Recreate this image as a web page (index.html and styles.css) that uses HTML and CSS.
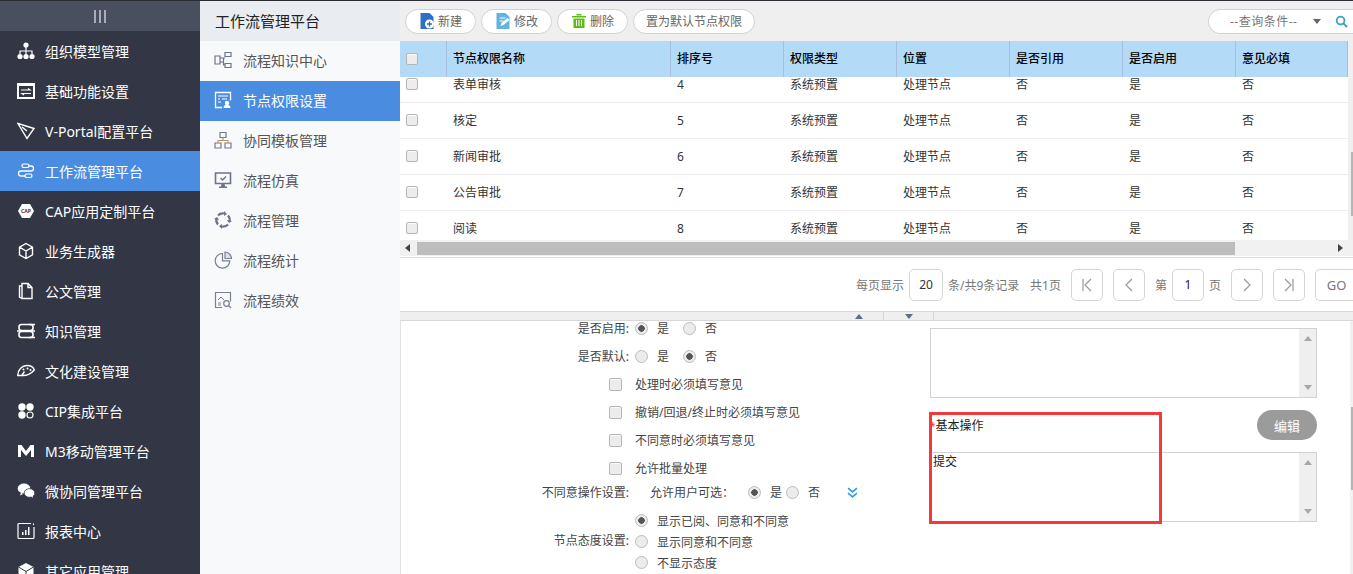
FILE: index.html
```html
<!DOCTYPE html>
<html lang="zh-CN">
<head>
<meta charset="utf-8">
<title>节点权限设置</title>
<link rel="stylesheet" href="styles.css">
</head>
<body>
<div class="app">
  <nav class="rail">
    <div class="rail-top"><span class="bars"><i></i><i></i><i></i></span></div>
    <a class="rail-item"><svg class="ri" viewBox="0 0 18 18"><circle cx="9" cy="3" r="2.6" fill="#fff"/><path d="M9 5v4M3 12V9h12v3M9 9v3" stroke="#fff" stroke-width="1.2" fill="none"/><circle cx="3" cy="14.5" r="2.6" fill="#fff"/><circle cx="9" cy="14.5" r="2.6" fill="#fff"/><circle cx="15" cy="14.5" r="2.6" fill="#fff"/></svg><span>组织模型管理</span></a>
    <a class="rail-item"><svg class="ri" viewBox="0 0 18 18"><path d="M0 1h18v16H0z" fill="#fff"/><path d="M2 4h14v11H2z" fill="#333745"/><path d="M4 8h9l-2-1.500M14 11.500H5l2 1.500" stroke="#fff" stroke-width="1.200" fill="none"/></svg><span>基础功能设置</span></a>
    <a class="rail-item"><svg class="ri" viewBox="0 0 18 18"><path d="M1 1.500l16 5-7 10zM5 5l5 4" fill="none" stroke="#fff" stroke-width="1.400"/></svg><span>V-Portal配置平台</span></a>
    <a class="rail-item is-on"><svg class="ri" viewBox="0 0 18 18"><path d="M6 4h8a2.500 2.500 0 0 1 0 5H4a2.500 2.500 0 0 0 0 5h7" fill="none" stroke="#fff" stroke-width="1.300"/><rect x="5" y="2" width="7" height="3.500" rx="1.700" fill="#4a8de0" stroke="#fff" stroke-width="1.200"/><rect x="8" y="12" width="7" height="3.500" rx="1.700" fill="#4a8de0" stroke="#fff" stroke-width="1.200"/></svg><span>工作流管理平台</span></a>
    <a class="rail-item"><svg class="ri" viewBox="0 0 18 18"><path d="M5 2h8l4 7-4 7H5L1 9z" fill="#fff"/><text x="9" y="11" class="cap-text">CAP</text></svg><span>CAP应用定制平台</span></a>
    <a class="rail-item"><svg class="ri" viewBox="0 0 18 18"><path d="M9 1.500l6.500 3.700v7.600L9 16.500l-6.500-3.700V5.200zM2.500 5.200L9 9l6.500-3.800M9 9v7.500" fill="none" stroke="#fff" stroke-width="1.400"/></svg><span>业务生成器</span></a>
    <a class="rail-item"><svg class="ri" viewBox="0 0 18 18"><path d="M5 1.500h6l4 4V16.500H5zM11 1.500v4h4M5 4H2.500v11L5 16.500" fill="none" stroke="#fff" stroke-width="1.400"/></svg><span>公文管理</span></a>
    <a class="rail-item"><svg class="ri" viewBox="0 0 18 18"><rect x="2" y="2.500" width="14" height="6" rx="2.500" fill="none" stroke="#fff" stroke-width="1.600"/><rect x="2" y="9.500" width="14" height="6" rx="2.500" fill="none" stroke="#fff" stroke-width="1.600"/><path d="M0 9h18M12 2.500h6M12 15.500h6" stroke="#fff" stroke-width="1.500"/></svg><span>知识管理</span></a>
    <a class="rail-item"><svg class="ri" viewBox="0 0 18 18"><path d="M.7 13.500C1 7.500 5 3.500 10 3.500c3.500 0 6.500 1.800 7.300 4.500-3 3.500-6.500 5.500-11.300 5.500zM5 13l2.500-3.500" fill="none" stroke="#fff" stroke-width="1.400"/><circle cx="10.500" cy="6.500" r="1" fill="#fff"/><circle cx="6.500" cy="7.500" r="1" fill="#fff"/><circle cx="13.500" cy="8" r="1" fill="#fff"/></svg><span>文化建设管理</span></a>
    <a class="rail-item"><svg class="ri" viewBox="0 0 18 18"><circle cx="5" cy="5" r="3.700" fill="#fff"/><circle cx="13" cy="5" r="3.700" fill="#fff"/><circle cx="5" cy="13" r="3.700" fill="#fff"/><circle cx="13" cy="13" r="3" fill="none" stroke="#fff" stroke-width="1.200"/></svg><span>CIP集成平台</span></a>
    <a class="rail-item"><svg class="ri" viewBox="0 0 18 18"><path d="M1 3h3.500L9 9l4.500-6H17v12h-3V8l-5 6-5-6v7H1z" fill="#fff"/></svg><span>M3移动管理平台</span></a>
    <a class="rail-item"><svg class="ri" viewBox="0 0 18 18"><ellipse cx="7" cy="6.500" rx="6.300" ry="5" fill="#fff"/><ellipse cx="12.500" cy="11" rx="5.300" ry="4.300" fill="#fff" stroke="#333745" stroke-width=".8"/><path d="M4 10.500l-1 3 3-1.500zM14 14l2 2-.5-3z" fill="#fff"/></svg><span>微协同管理平台</span></a>
    <a class="rail-item"><svg class="ri" viewBox="0 0 18 18"><path d="M14 1.500H2a1 1 0 0 0-1 1v13a1 1 0 0 0 1 1h14a1 1 0 0 0 1-1V5M16.500 1.500v1.500" fill="none" stroke="#fff" stroke-width="1.200"/><path d="M5 10h1.500v3H5zM8 8h1.500v5H8zM11 5h1.500v8H11z" fill="#fff"/></svg><span>报表中心</span></a>
    <a class="rail-item"><svg class="ri" viewBox="0 0 18 18"><path d="M9 1l7.500 4v8.500L9 17.500l-7.500-4V5z" fill="#fff"/><path d="M1.500 5L9 9.500 16.500 5M9 9.500v8" stroke="#333745" stroke-width="1" fill="none"/></svg><span>其它应用管理</span></a>
  </nav>

  <aside class="sub">
    <div class="sub-title">工作流管理平台</div>
    <a class="sub-item"><svg class="si" viewBox="0 0 18 18"><path d="M1 5h5v8H1zM11 1.500h6v4h-6zM11 12.500h6v4h-6zM6 7h5M6 11h3.500V14H11M9.500 7v4" fill="none" stroke="#6d7388" stroke-width="1.200"/></svg><span>流程知识中心</span></a>
    <a class="sub-item is-on"><svg class="si" viewBox="0 0 18 18"><path d="M8 16.500H1.500v-15h15v8" fill="none" stroke="#fff" stroke-width="1.300"/><path d="M4 5h10M4 8h2M8 8h5M4 11h3" stroke="#fff" stroke-width="1.200"/><circle cx="13" cy="12" r="2.200" fill="#fff"/><path d="M9.500 17c0-2.500 1.500-3 3.500-3s3.500.5 3.500 3z" fill="#fff"/></svg><span>节点权限设置</span></a>
    <a class="sub-item"><svg class="si" viewBox="0 0 18 18"><path d="M6 1.500h6v5H6zM1 12h6v5H1zM11 12h6v5h-6z" fill="none" stroke="#757b8e" stroke-width="1.200"/><path d="M9 6.500V9.500M4 12V9.500h10V12" fill="none" stroke="#b99b6a" stroke-width="1.200"/></svg><span>协同模板管理</span></a>
    <a class="sub-item"><svg class="si" viewBox="0 0 18 18"><path d="M1.500 2h15v10.500h-15z" fill="none" stroke="#6d7388" stroke-width="1.600"/><path d="M6.500 7l2 2 3.500-3.500" fill="none" stroke="#6d7388" stroke-width="1.400"/><path d="M7.500 12.500h3l.5 3H7z M5 15.500h8V17H5z" fill="#6d7388"/></svg><span>流程仿真</span></a>
    <a class="sub-item"><svg class="si" viewBox="0 0 18 18"><path d="M4 4.500a6.500 6.500 0 0 1 6-2M14 4.500a6.500 6.500 0 0 1 1.500 6M14 13.500a6.500 6.500 0 0 1-6 2M4 13.500a6.500 6.500 0 0 1-1.500-6" fill="none" stroke="#6d7388" stroke-width="2.200"/><path d="M10 0l3 3-3 2zM8 18l-3-3 3-2zM0 8l3-2 2 3zM18 10l-3 2-2-3z" fill="#6d7388"/></svg><span>流程管理</span></a>
    <a class="sub-item"><svg class="si" viewBox="0 0 18 18"><path d="M8.500 2.500a7.300 7.300 0 1 0 7.300 7.300H8.500z" fill="none" stroke="#7a8092" stroke-width="1.200"/><path d="M11 1v6.500h6.500A6.800 6.800 0 0 0 11 1z" fill="#dfe1e8" stroke="#7a8092" stroke-width="1.200"/></svg><span>流程统计</span></a>
    <a class="sub-item"><svg class="si" viewBox="0 0 18 18"><path d="M8 16.500H1.500v-15h15v9" fill="none" stroke="#7a8092" stroke-width="1.200"/><path d="M4 9l3-3 3 3M4 12h3M4 14h3" fill="none" stroke="#7a8092" stroke-width="1"/><circle cx="12.500" cy="12.500" r="2.800" fill="none" stroke="#7a8092" stroke-width="1.200"/><path d="M14.500 14.500l2.500 2.500" stroke="#7a8092" stroke-width="1.200"/></svg><span>流程绩效</span></a>
  </aside>

  <main class="main">
    <div class="toolbar">
      <button class="tb-btn"><svg class="tb-ico" viewBox="0.500 0 14 16"><path d="M1 0h9l4 4v12H1z" fill="#2f6ec4"/><circle cx="10" cy="11" r="4.500" fill="#fff"/><path d="M7.500 11h5M10 8.500v5" stroke="#2f6ec4" stroke-width="1.300"/></svg>新建</button>
      <button class="tb-btn"><svg class="tb-ico" viewBox="0.500 0 14 16"><path d="M1 0h9l4 4v12H1z" fill="#62b3e0"/><path d="M4 5h6M4 8h4" stroke="#fff" stroke-width="1.200"/><path d="M5 13l1-3 6-5 2 2-6 5z" fill="#fff"/></svg>修改</button>
      <button class="tb-btn"><svg class="tb-ico" viewBox="1 0.500 14 15"><path d="M1 3h14v1.500H1zM5.500 1h5v1.500h-5zM2.500 5.500h11V15h-11z" fill="#5dbb1c"/><path d="M5.500 7v6M8 7v6M10.500 7v6" stroke="#fff" stroke-width="1"/></svg>删除</button>
      <button class="tb-btn is-text">置为默认节点权限</button>
      <div class="query"><span class="query-text">--查询条件--</span><i class="tri-down"></i><svg class="query-ico" viewBox="0 0 14 14"><circle cx="6" cy="6" r="4.200" fill="none" stroke="#3fa0c8" stroke-width="2"/><path d="M9 9l4 4" stroke="#3fa0c8" stroke-width="2.200"/></svg></div>
    </div>

    <div class="table-wrap">
      <div class="grid-row head">
        <div class="c c0"><i class="cb"></i></div><div class="c">节点权限名称</div><div class="c">排序号</div><div class="c">权限类型</div><div class="c">位置</div><div class="c">是否引用</div><div class="c">是否启用</div><div class="c">意见必填</div>
      </div>
      <div class="table-body">
        <div class="rows">
          <div class="grid-row"><div class="c c0"><i class="cb"></i></div><div class="c">表单审核</div><div class="c">4</div><div class="c">系统预置</div><div class="c">处理节点</div><div class="c">否</div><div class="c">是</div><div class="c">否</div></div>
          <div class="grid-row"><div class="c c0"><i class="cb"></i></div><div class="c">核定</div><div class="c">5</div><div class="c">系统预置</div><div class="c">处理节点</div><div class="c">否</div><div class="c">是</div><div class="c">否</div></div>
          <div class="grid-row"><div class="c c0"><i class="cb"></i></div><div class="c">新闻审批</div><div class="c">6</div><div class="c">系统预置</div><div class="c">处理节点</div><div class="c">否</div><div class="c">是</div><div class="c">否</div></div>
          <div class="grid-row"><div class="c c0"><i class="cb"></i></div><div class="c">公告审批</div><div class="c">7</div><div class="c">系统预置</div><div class="c">处理节点</div><div class="c">否</div><div class="c">是</div><div class="c">否</div></div>
          <div class="grid-row"><div class="c c0"><i class="cb"></i></div><div class="c">阅读</div><div class="c">8</div><div class="c">系统预置</div><div class="c">处理节点</div><div class="c">否</div><div class="c">是</div><div class="c">否</div></div>
        </div>
      </div>
      <div class="hbar"><i class="tri-left"></i><div class="hbar-thumb"></div><i class="tri-right"></i></div>
      <div class="vbar"><div class="vbar-thumb"></div></div>
    </div>

    <div class="pager">
      <span>每页显示</span><span class="pg-box pg-size">20</span><span class="pg-count">条/共9条记录</span><span class="pg-total">共1页</span>
      <span class="pg-box pg-nav"><svg viewBox="0 0 12 14"><path d="M2 1v12M10 1L4 7l6 6" fill="none" stroke="#999" stroke-width="1.200"/></svg></span>
      <span class="pg-box pg-nav"><svg viewBox="0 0 12 14"><path d="M9 1L3 7l6 6" fill="none" stroke="#999" stroke-width="1.200"/></svg></span>
      <span>第</span><span class="pg-box pg-num">1</span><span class="pg-ye">页</span>
      <span class="pg-box pg-nav"><svg viewBox="0 0 12 14"><path d="M3 1l6 6-6 6" fill="none" stroke="#999" stroke-width="1.200"/></svg></span>
      <span class="pg-box pg-nav"><svg viewBox="0 0 12 14"><path d="M10 1v12M2 1l6 6-6 6" fill="none" stroke="#999" stroke-width="1.200"/></svg></span>
      <span class="pg-box pg-go">GO</span>
    </div>

    <div class="splitter"><span class="sp-cell"><i class="tri-up"></i></span><span class="sp-cell"><i class="tri-down"></i></span></div>

    <div class="form">
      <div class="form-left">
        <div class="f-row"><label class="f-label">是否启用:</label><i class="radio on"></i><span class="r-txt">是</span><i class="radio"></i><span class="r-txt">否</span></div>
        <div class="f-row"><label class="f-label">是否默认:</label><i class="radio"></i><span class="r-txt">是</span><i class="radio on"></i><span class="r-txt">否</span></div>
        <div class="f-row chk"><i class="cb"></i><span>处理时必须填写意见</span></div>
        <div class="f-row chk"><i class="cb"></i><span>撤销/回退/终止时必须填写意见</span></div>
        <div class="f-row chk"><i class="cb"></i><span>不同意时必须填写意见</span></div>
        <div class="f-row chk"><i class="cb"></i><span>允许批量处理</span></div>
        <div class="f-row opt"><label class="f-label">不同意操作设置:</label><span class="opt-txt">允许用户可选：</span><i class="radio on"></i><span class="r-tight">是</span><i class="radio"></i><span class="r-txt">否</span>
          <svg class="dbl" viewBox="0 0 10 10"><path d="M1 1l4 3.500L9 1M1 5.500L5 9l4-3.500" fill="none" stroke="#2b9af3" stroke-width="1.400"/></svg></div>
        <div class="attitude">
          <label class="f-label att-label">节点态度设置:</label>
          <div class="att-list">
            <div class="att"><i class="radio on"></i><span>显示已阅、同意和不同意</span></div>
            <div class="att"><i class="radio"></i><span>显示同意和不同意</span></div>
            <div class="att"><i class="radio"></i><span>不显示态度</span></div>
          </div>
        </div>
      </div>
      <div class="form-right">
        <div class="ta"><div class="ta-body"></div><div class="ta-bar"><i class="tri-up"></i><i class="tri-down"></i></div></div>
        <div class="op-head"><span class="op-title"><b>*</b>基本操作</span><button class="edit-btn">编辑</button></div>
        <div class="ta"><div class="ta-body">提交</div><div class="ta-bar"><i class="tri-up"></i><i class="tri-down"></i></div></div>
      </div>
      <div class="form-track"><div class="form-thumb"></div></div>
    </div>
    <div class="mark"></div>
  </main>
</div>
</body>
</html>
```

FILE: styles.css
```css
* { box-sizing: border-box; }
html, body { margin: 0; height: 100%; overflow: hidden; }
body {
  font-family: "Noto Sans", "Noto Sans CJK SC", sans-serif;
  font-size: 12px;
  color: #333;
  background: #fff;
}
i { display: block; font-style: normal; }
.app {
  display: flex;
  height: 574px;
  border-top: 1px solid #2a2b33;
}

/* first rail */
.rail { width: 200px; flex: none; background: #333745; overflow: hidden; }
.rail-top {
  height: 30px;
  background: #4a4f60;
  display: flex;
  align-items: center;
  justify-content: center;
}
.bars { display: flex; gap: 3px; }
.bars i { width: 2px; height: 13px; background: #a9acb6; }
.rail-item {
  display: flex;
  align-items: center;
  height: 40px;
  padding-left: 17px;
  color: #fff;
  font-size: 14px;
}
.rail-item.is-on { background: #4a8de0; }
.ri { width: 18px; height: 18px; margin-right: 10px; flex: none; }
.cap-text { font-size: 5px; font-weight: 700; fill: #333745; text-anchor: middle; }

/* second rail */
.sub { width: 200px; flex: none; background: #f8f9fb; }
.sub-title {
  height: 40px;
  line-height: 40px;
  padding-left: 15px;
  background: #e9edf2;
  color: #222;
  font-size: 15px;
}
.sub-item {
  display: flex;
  align-items: center;
  height: 40px;
  padding-left: 14px;
  padding-bottom: 2px;
  color: #555;
  font-size: 14px;
}
.sub-item.is-on { background: #4a8de0; color: #fff; }
.si { width: 18px; height: 18px; margin-right: 11px; flex: none; }

/* main */
.main { flex: 1; min-width: 0; position: relative; display: flex; flex-direction: column; }
.toolbar {
  height: 40px;
  background: #efefef;
  display: flex;
  align-items: center;
  gap: 5px;
  padding: 0 0 0 5px;
}
.tb-btn {
  height: 25px;
  margin: 0;
  padding: 0 13px 0 14px;
  display: flex;
  align-items: center;
  gap: 4px;
  background: #fff;
  border: 1px solid #d2d2d2;
  border-radius: 13px;
  color: #666;
  font: inherit;
}
.tb-btn.is-text { padding: 0 12px; }
.tb-ico { width: 14px; height: 16px; flex: none; }
.query {
  margin-left: auto;
  width: 145px;
  height: 25px;
  background: #fff;
  border: 1px solid #d2d2d2;
  border-right: 0;
  border-radius: 13px 0 0 13px;
  display: flex;
  align-items: center;
  padding-left: 21px;
  color: #777;
}
.query-text { width: 83px; letter-spacing: .5px; white-space: nowrap; }
.query .tri-down { border-top-color: #5e6577; }
.query-ico { width: 13px; height: 13px; margin-left: 14px; flex: none; }

.tri-down { width: 0; height: 0; border: 4.500px solid transparent; border-bottom: 0; border-top: 5px solid #5e6c88; }
.tri-up { width: 0; height: 0; border: 4.500px solid transparent; border-top: 0; border-bottom: 5px solid #5e6c88; }
.tri-left { width: 0; height: 0; border: 4px solid transparent; border-left: 0; border-right: 5px solid #444; }
.tri-right { width: 0; height: 0; border: 4px solid transparent; border-right: 0; border-left: 5px solid #444; }

.table-wrap { position: relative; }
.grid-row {
  display: grid;
  grid-template-columns: 46px 224px 113px 113px 113px 113px 113px 113px;
  height: 36px;
  align-items: center;
  border-bottom: 1px solid #ececec;
  padding-bottom: 1px;
  color: #333;
}
.grid-row.head {
  background: #b3daf7;
  color: #000;
  font-weight: 500;
  border-bottom: 0;
  padding-bottom: 0;
}
.head .c { height: 36px; line-height: 36px; border-left: 1px solid #a7bedc; padding-left: 6px; }
.head .c.c0 { border-left: 0; }
.head .c:last-child { border-right: 1px solid #a7bedc; }
.c { padding-left: 7px; white-space: nowrap; }
.c.c0 { padding-left: 6px; display: flex; align-items: center; height: 100%; }
.cb {
  width: 12px;
  height: 12px;
  flex: none;
  border: 1px solid #b5b5b5;
  border-radius: 2px;
  background: #ececec;
  box-shadow: inset 0 1px 1px #fff;
}
.table-body { height: 163px; overflow: hidden; }
.rows { margin-top: -10px; }
.hbar {
  height: 16px;
  margin-bottom: 1px;
  background: #f1f1f1;
  display: flex;
  align-items: center;
  padding: 0 10px 0 5px;
}
.hbar-thumb { width: 818px; height: 13px; background: #bdbdbd; margin-left: 7px; }
.hbar .tri-right { margin-left: auto; }
.vbar {
  position: absolute;
  right: 0;
  top: 0;
  width: 5px;
  height: 199px;
  background: #efefef;
}
.vbar-thumb {
  position: absolute;
  right: 0;
  top: 111px;
  width: 2px;
  height: 64px;
  background: #b5b5b5;
}

.pager {
  height: 54px;
  border-top: 1px solid #dcdcdc;
  display: flex;
  align-items: center;
  padding: 0 0 0 456px;
  color: #777;
  white-space: nowrap;
}
.pager > span { flex: none; }
.pg-box {
  display: flex;
  align-items: center;
  justify-content: center;
  height: 32px;
  border: 1px solid #d5d5d5;
  border-radius: 5px;
  background: #fff;
}
.pg-box svg { width: 12px; height: 14px; }
.pg-size { width: 34px; margin: 0 5px; color: #333; }
.pg-count { width: 73px; }
.pg-total { width: 32px; margin-left: 9px; margin-right: 9px; }
.pg-nav { width: 32px; margin-right: 10px; }
.pg-num { width: 32px; margin: 0 5px; color: #4a0a3c; }
.pg-ye { margin-right: 10px; }
.pg-go { width: 42px; font-size: 13px; border-right: 0; border-radius: 5px 0 0 5px; }

.splitter {
  height: 10px;
  background: #efefef;
  border-top: 1px solid #d8d8d8;
  border-bottom: 1px solid #d8d8d8;
  display: flex;
  padding-left: 434px;
}
.sp-cell {
  width: 50px;
  border-right: 1px solid #d4d4d4;
  display: flex;
  justify-content: center;
  align-items: center;
}

.form {
  flex: 1;
  min-height: 0;
  display: flex;
  overflow: hidden;
  border-left: 1px solid #e2e2e2;
  color: #444;
  position: relative;
}
.form-left { width: 529px; flex: none; margin-top: -7px; }
.f-row { display: flex; align-items: center; height: 28px; }
.f-label { width: 234px; flex: none; text-align: right; padding-right: 6px; color: #444; white-space: nowrap; }
.radio {
  width: 13px;
  height: 13px;
  border-radius: 50%;
  border: 1px solid #bcbcbc;
  background: #ececec;
  flex: none;
}
.radio.on { background: radial-gradient(circle, #555 0 3px, #ececec 3.5px); }
.r-txt { margin-left: 9px; width: 26px; }
.r-tight { margin-left: 9px; width: 16px; }
.chk { padding-left: 208px; }
.chk .cb { width: 13px; height: 13px; }
.chk span { margin-left: 13px; }
.opt { height: 20px; }
.opt-txt { margin-left: 15px; width: 98px; white-space: nowrap; }
.dbl { width: 11px; height: 11px; margin-left: 13px; flex: none; }
.attitude { display: flex; align-items: center; margin-top: 8px; }
.att-label { padding-bottom: 4px; }
.att-list { display: flex; flex-direction: column; }
.att { display: flex; align-items: center; height: 21px; }
.att span { margin-left: 9px; }
.form-right { width: 387px; flex: none; padding-top: 7px; color: #222; }
.ta {
  height: 70px;
  border: 1px solid #d2d2d2;
  display: flex;
}
.ta-body { flex: 1; line-height: 16px; padding: 1px 2px; color: #222; }
.ta-bar {
  width: 17px;
  background: #efefef;
  display: flex;
  flex-direction: column;
  justify-content: space-between;
  align-items: center;
  padding: 7px 0 7px;
}
.ta-bar .tri-up { border-bottom-color: #a8a8a8; }
.ta-bar .tri-down { border-top-color: #a8a8a8; }
.op-head {
  height: 54px;
  display: flex;
  align-items: center;
  justify-content: space-between;
}
.op-title b { color: #f33a3a; font-weight: 400; font-size: 10px; }
.edit-btn {
  width: 60px;
  height: 30px;
  margin: 0;
  border: 0;
  border-radius: 15px;
  background: #9b9b9b;
  color: #fff;
  font: inherit;
  font-size: 13px;
}
.form-track {
  position: absolute;
  right: 0;
  top: 0;
  bottom: 0;
  width: 3px;
  background: #f1f1f1;
}
.form-thumb { margin-top: 86px; height: 83px; margin-left: 1px; background: #b5b5b5; }
.mark {
  position: absolute;
  left: 529px;
  top: 411px;
  width: 233px;
  height: 112px;
  border: 3px solid #f33a3a;
}
```
